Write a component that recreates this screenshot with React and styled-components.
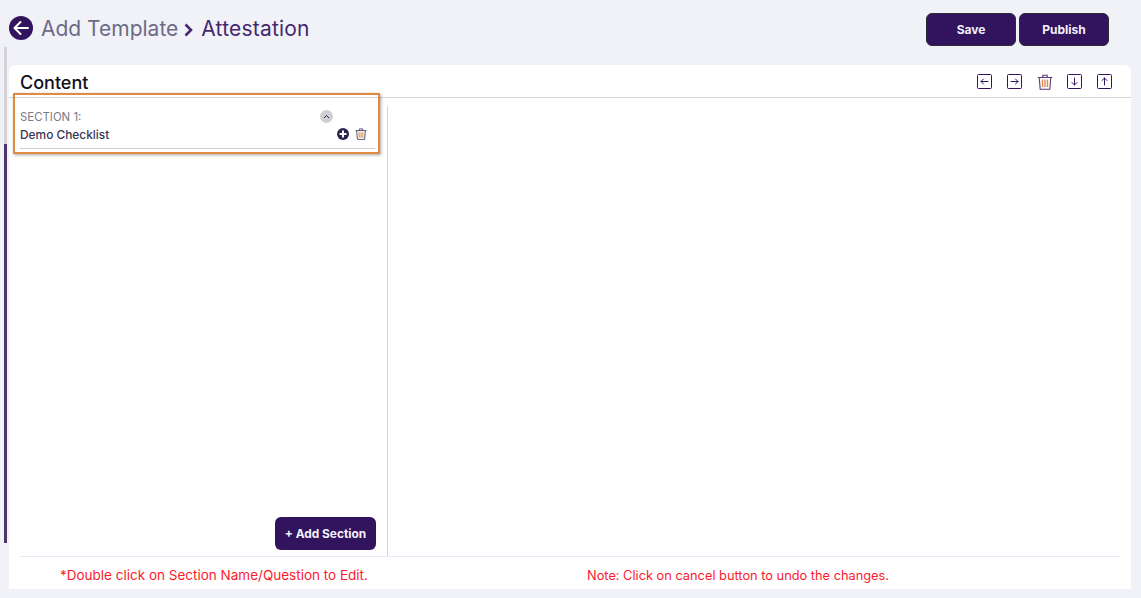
import React from 'react';
import styled, {createGlobalStyle} from 'styled-components';

const GlobalStyle = createGlobalStyle`
  html, body {
    margin: 0;
    padding: 0;
    height: 100%;
    background: #f0f2f8;
    font-family: Inter, "Liberation Sans", sans-serif;
    overflow: hidden;
  }
`;

const PURPLE = '#31135e';

const Page = styled.div`
  position: relative;
  width: 1141px;
  height: 598px;
  padding: 13px 10px 9px 9px;
  box-sizing: border-box;
  display: flex;
  flex-direction: column;
`;

const ScrollTrack = styled.div`
  position: absolute;
  left: 4px;
  top: 47px;
  width: 3px;
  height: 496px;
  background: #d3d3d8;
`;

const ScrollThumb = styled.div`
  position: absolute;
  left: 0;
  top: 97px;
  bottom: 0;
  width: 3px;
  background: #4b3569;
`;

const TopBar = styled.header`
  display: flex;
  align-items: flex-start;
  justify-content: space-between;
  height: 52px;
  padding-right: 22px;
`;

const Crumbs = styled.div`
  display: flex;
  align-items: center;
  height: 30px;
  font-size: 21px;
`;

const BackIcon = styled.svg`
  width: 24px;
  height: 24px;
  margin-right: 8px;
  flex: none;
`;

const CrumbParent = styled.span`
  color: #6d6a85;
`;

const CrumbCurrent = styled.span`
  color: #45286f;
  letter-spacing: 0.2px;
`;

const Chevron = styled.svg`
  width: 9px;
  height: 14px;
  margin: 3px 8px 0 6px;
`;

const Actions = styled.div`
  display: flex;
  gap: 3px;
`;

const PrimaryButton = styled.button`
  width: 90px;
  height: 33px;
  padding: 0;
  border: 1px solid #2a2a3a;
  border-radius: 6px;
  background: ${PURPLE};
  color: #f4f1fb;
  font-family: inherit;
  font-size: 12px;
  font-weight: 700;
`;

const Card = styled.main`
  flex: 1;
  min-height: 0;
  display: flex;
  flex-direction: column;
  background: #fff;
  border-radius: 6px 6px 0 0;
`;

const CardHead = styled.div`
  display: flex;
  align-items: flex-start;
  justify-content: space-between;
  height: 32px;
  padding: 0 18px 0 11px;
  border-bottom: 1px solid #d4d4d4;
`;

const CardTitle = styled.h2`
  margin: 7px 0 0;
  font-size: 18px;
  line-height: 22px;
  font-weight: 500;
  color: #10101c;
`;

const Tools = styled.div`
  display: flex;
  gap: 14px;
  margin-top: 9px;
`;

const ToolIcon = styled.svg`
  width: 16px;
  height: 16px;
  display: block;
`;

const TrashIcon = styled.svg`
  display: block;
  width: ${p => p.$size}px;
  height: ${p => p.$size}px;
`;

const Body = styled.div`
  flex: 1;
  min-height: 0;
  display: flex;
  padding-right: 11px;
`;

const LeftCol = styled.section`
  width: 379px;
  display: flex;
  flex-direction: column;
  margin-top: 8px;
  border-right: 1px solid #d4d4d4;
  box-sizing: border-box;
`;

const Highlight = styled.div`
  margin: -13px 7px 0 4px;
  height: 61px;
  padding: 14px 3px 0 5px;
  box-sizing: border-box;
  border: 2px solid #e08b3f;
  box-shadow: 1px 1px 3px rgba(0, 0, 0, 0.35);
  position: relative;
`;

const SectionRow = styled.div`
  display: flex;
  align-items: center;
  justify-content: space-between;
  height: ${p => p.$height}px;
`;

const SectionLabel = styled.span`
  font-size: 11.4px;
  color: #7a7a88;
`;

const SectionName = styled.span`
  font-size: 11.9px;
  font-weight: 500;
  color: #3a3553;
`;

const Collapse = styled.span`
  width: 13px;
  height: 13px;
  margin-right: 42px;
  border-radius: 50%;
  background: #cfcfcf;
  display: flex;
  align-items: center;
  justify-content: center;
`;

const SectionIcons = styled.div`
  display: flex;
  align-items: center;
  gap: 6px;
  margin-right: 8px;
`;

const Rule = styled.div`
  height: 1px;
  margin-top: 4px;
  background: #cfcfcf;
`;

const AddSection = styled.button`
  align-self: flex-end;
  margin: auto 11px 6px 0;
  width: 101px;
  height: 33px;
  padding: 0;
  border: 0;
  border-radius: 6px;
  background: ${PURPLE};
  color: #f4f1fb;
  font-family: inherit;
  font-size: 11.9px;
  font-weight: 700;
`;

const Footer = styled.footer`
  height: 33px;
  margin: 0 11px;
  padding-top: 4px;
  box-sizing: border-box;
  border-top: 1px solid #e8e8f6;
  display: flex;
  align-items: center;
  color: #fb1a2c;
`;

const NoteLeft = styled.span`
  width: 567px;
  padding-left: 40px;
  box-sizing: border-box;
  font-size: 13.5px;
  white-space: nowrap;
`;

const NoteRight = styled.span`
  font-size: 12.8px;
  white-space: nowrap;
`;

const BoxArrow = ({d}) => (
  <ToolIcon viewBox="0 0 16 16" fill="none">
    <rect x="0.5" y="0.5" width="14" height="14" rx="1" stroke="#31135e" strokeWidth="1" />
    <path d={d} stroke="#31135e" strokeWidth="1" strokeLinecap="round" strokeLinejoin="round" />
  </ToolIcon>
);

const Trash = ({size, color}) => (
  <TrashIcon $size={size} viewBox="0 0 16 16" fill="none" stroke={color} strokeWidth="1.100">
    <path d="M.8 3.500h14.400M5.800 3.500V1.200h4.400v2.300M2.200 3.500l1 11.700h9.600l1-11.700" />
    <path d="M5.500 5.500v7.500M8 5.500v7.500M10.500 5.500v7.500" stroke="#d98a4e" strokeWidth="1.400" />
  </TrashIcon>
);

const App = () => (
  <Page>
    <GlobalStyle />
    <ScrollTrack>
      <ScrollThumb />
    </ScrollTrack>
    <TopBar>
      <Crumbs>
        <BackIcon viewBox="0 0 24 24">
          <circle cx="12" cy="12" r="12" fill="#31135e" />
          <path d="M19 12H6M11.5 6 5.500 12l6 6" fill="none" stroke="#fff" strokeWidth="2" strokeLinecap="round" strokeLinejoin="round" />
        </BackIcon>
        <CrumbParent>Add Template</CrumbParent>
        <Chevron viewBox="0 0 9 14">
          <path d="M1.500 1.500 7 7l-5.500 5.500" fill="none" stroke="#45286f" strokeWidth="2.600" />
        </Chevron>
        <CrumbCurrent>Attestation</CrumbCurrent>
      </Crumbs>
      <Actions>
        <PrimaryButton>Save</PrimaryButton>
        <PrimaryButton>Publish</PrimaryButton>
      </Actions>
    </TopBar>
    <Card>
      <CardHead>
        <CardTitle>Content</CardTitle>
        <Tools>
          <BoxArrow d="M11 7.500H4M6.500 5 4 7.500 6.500 10" />
          <BoxArrow d="M4 7.500h7M8.500 5 11 7.500 8.500 10" />
          <Trash size={16} color="#5a3a78" />
          <BoxArrow d="M7.500 4v7M5 8.500 7.500 11 10 8.500" />
          <BoxArrow d="M7.500 11V4M5 6.500 7.500 4 10 6.500" />
        </Tools>
      </CardHead>
      <Body>
        <LeftCol>
          <Highlight>
            <SectionRow $height={15}>
              <SectionLabel>SECTION 1:</SectionLabel>
              <Collapse>
                <svg width="7" height="5" viewBox="0 0 7 5">
                  <path d="M1 4 3.500 1.500 6 4" fill="none" stroke="#31135e" strokeWidth="1" />
                </svg>
              </Collapse>
            </SectionRow>
            <SectionRow $height={20}>
              <SectionName>Demo Checklist</SectionName>
              <SectionIcons>
                <svg width="12" height="12" viewBox="0 0 12 12">
                  <circle cx="6" cy="6" r="6" fill="#2b2350" />
                  <path d="M6 2.500v7M2.500 6h7" stroke="#fff" strokeWidth="2" />
                </svg>
                <Trash size={12} color="#3a3553" />
              </SectionIcons>
            </SectionRow>
            <Rule />
          </Highlight>
          <AddSection>+ Add Section</AddSection>
        </LeftCol>
      </Body>
      <Footer>
        <NoteLeft>*Double click on Section Name/Question to Edit.</NoteLeft>
        <NoteRight>Note: Click on cancel button to undo the changes.</NoteRight>
      </Footer>
    </Card>
  </Page>
);

export default App;
